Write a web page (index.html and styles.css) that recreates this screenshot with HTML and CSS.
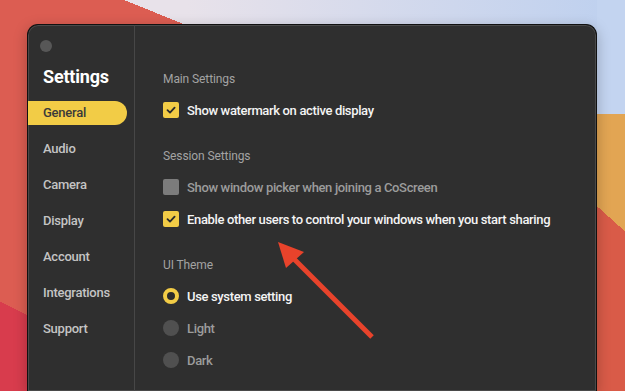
FILE: index.html
```html
<!DOCTYPE html>
<html lang="en">
    <head>
        <meta charset="UTF-8">
        <meta name="viewport" content="width=device-width, initial-scale=1.0">
        <title>Settings</title>
        <link rel="stylesheet" href="styles.css">
    </head>
    <body>
        <div class="window">
            <div class="sidebar">
                <div class="traffic-light"></div>
                <div class="sidebar-title">Settings</div>
                <div class="nav">
                    <div class="nav-item active">General</div>
                    <div class="nav-item">Audio</div>
                    <div class="nav-item">Camera</div>
                    <div class="nav-item">Display</div>
                    <div class="nav-item">Account</div>
                    <div class="nav-item">Integrations</div>
                    <div class="nav-item">Support</div>
                </div>
            </div>
            <div class="content">
                <div class="section">
                    <div class="section-title">Main Settings</div>
                    <div class="option">
                        <span class="checkbox checked">
                            <svg viewBox="0 0 16 16" width="16" height="16"><path d="M4.5 8.2 L7 10.6 L11.6 5.6" fill="none" stroke="#2b2b2b" stroke-width="1.8" stroke-linecap="round" stroke-linejoin="round"/></svg>
                        </span>
                        <span class="label">Show watermark on active display</span>
                    </div>
                </div>
                <div class="section">
                    <div class="section-title">Session Settings</div>
                    <div class="option">
                        <span class="checkbox"></span>
                        <span class="label muted">Show window picker when joining a CoScreen</span>
                    </div>
                    <div class="option">
                        <span class="checkbox checked">
                            <svg viewBox="0 0 16 16" width="16" height="16"><path d="M4.5 8.2 L7 10.6 L11.6 5.6" fill="none" stroke="#2b2b2b" stroke-width="1.8" stroke-linecap="round" stroke-linejoin="round"/></svg>
                        </span>
                        <span class="label">Enable other users to control your windows when you start sharing</span>
                    </div>
                </div>
                <div class="section">
                    <div class="section-title">UI Theme</div>
                    <div class="option">
                        <span class="radio selected"></span>
                        <span class="label">Use system setting</span>
                    </div>
                    <div class="option">
                        <span class="radio"></span>
                        <span class="label muted">Light</span>
                    </div>
                    <div class="option">
                        <span class="radio"></span>
                        <span class="label muted">Dark</span>
                    </div>
                </div>
            </div>
        </div>

        <!-- annotation arrow drawn over the screenshot -->
        <svg class="arrow" viewBox="0 0 625 391" width="625" height="391">
            <line x1="372" y1="337" x2="294" y2="259" stroke="#e8432b" stroke-width="5"/>
            <polygon points="278,242 286,268 304,252" fill="#e8432b"/>
        </svg>
    </body>
</html>
```

FILE: styles.css
```css
html, body {
    margin: 0;
    padding: 0;
}

body {
    width: 625px;
    height: 391px;
    overflow: hidden;
    box-sizing: border-box;
    padding: 24px 28px 0 27px;
    font-family: Roboto, "Noto Sans", sans-serif;
    background-color: #c9d7ef;
    background-image:
        linear-gradient(to bottom, #c3d4f0 0 114px, transparent 114px),
        linear-gradient(222deg, #e2a553 0 172px, #d95b48 172px),
        linear-gradient(206deg, transparent 0 283px, #d83c4d 283px),
        linear-gradient(22deg, #dc5d52 0 409px, transparent 409px),
        linear-gradient(90deg, #e8e2ea 30%, #bdd0ef 100%);
    background-size: 28px 100%, 28px 100%, 27px 100%, 100% 100%, 100% 100%;
    background-position: right top, right top, left top, 0 0, 0 0;
    background-repeat: no-repeat;
}

.window {
    display: flex;
    height: 367px;
    box-sizing: border-box;
    background-color: #2f2f2f;
    border: 1px solid #111;
    border-bottom: none;
    border-radius: 11px 11px 0 0;
    box-shadow: inset 0 0 0 1px #4a4a4a, 0 4px 14px rgba(0, 0, 0, 0.25);
    overflow: hidden;
}

.sidebar {
    width: 107px;
    flex-shrink: 0;
    border-right: 1px solid #474747;
    padding-top: 15px;
    box-sizing: border-box;
}

.traffic-light {
    width: 12px;
    height: 12px;
    margin-left: 12px;
    border-radius: 50%;
    background-color: #575757;
}

.sidebar-title {
    margin: 13px 0 12px 15px;
    height: 24px;
    line-height: 24px;
    font-size: 18px;
    font-weight: bold;
    letter-spacing: -0.2px;
    color: #fff;
}

.nav {
    display: flex;
    flex-direction: column;
    gap: 12px;
}

.nav-item {
    height: 24px;
    line-height: 24px;
    padding-left: 15px;
    font-size: 13px;
    font-weight: 500;
    letter-spacing: -0.25px;
    color: #c4c4c4;
}

.nav-item.active {
    width: 84px;
    background-color: #f2cc46;
    color: #3a3a3a;
    border-radius: 0 12px 12px 0;
}

.content {
    flex: 1;
    padding: 46px 0 0 28px;
}

.section {
    margin-bottom: 22px;
}

.section-title {
    height: 16px;
    line-height: 16px;
    margin-bottom: 7px;
    font-size: 12px;
    letter-spacing: -0.1px;
    color: #a3a3a3;
}

.option {
    display: flex;
    align-items: center;
    gap: 8px;
    height: 32px;
}

.checkbox {
    width: 16px;
    height: 16px;
    border-radius: 2px;
    background-color: #7c7c7c;
}

.checkbox.checked {
    background-color: #f2cc46;
}

.checkbox svg {
    display: block;
}

.radio {
    width: 16px;
    height: 16px;
    border-radius: 50%;
    background-color: #505050;
    box-sizing: border-box;
}

.radio.selected {
    background-color: #2b2b2b;
    border: 4.5px solid #f2cc46;
}

.label {
    font-size: 13px;
    font-weight: 500;
    letter-spacing: -0.35px;
    color: #f4f4f4;
}

.label.muted {
    color: #9c9c9c;
}

.arrow {
    position: absolute;
    left: 0;
    top: 0;
    pointer-events: none;
}
```
